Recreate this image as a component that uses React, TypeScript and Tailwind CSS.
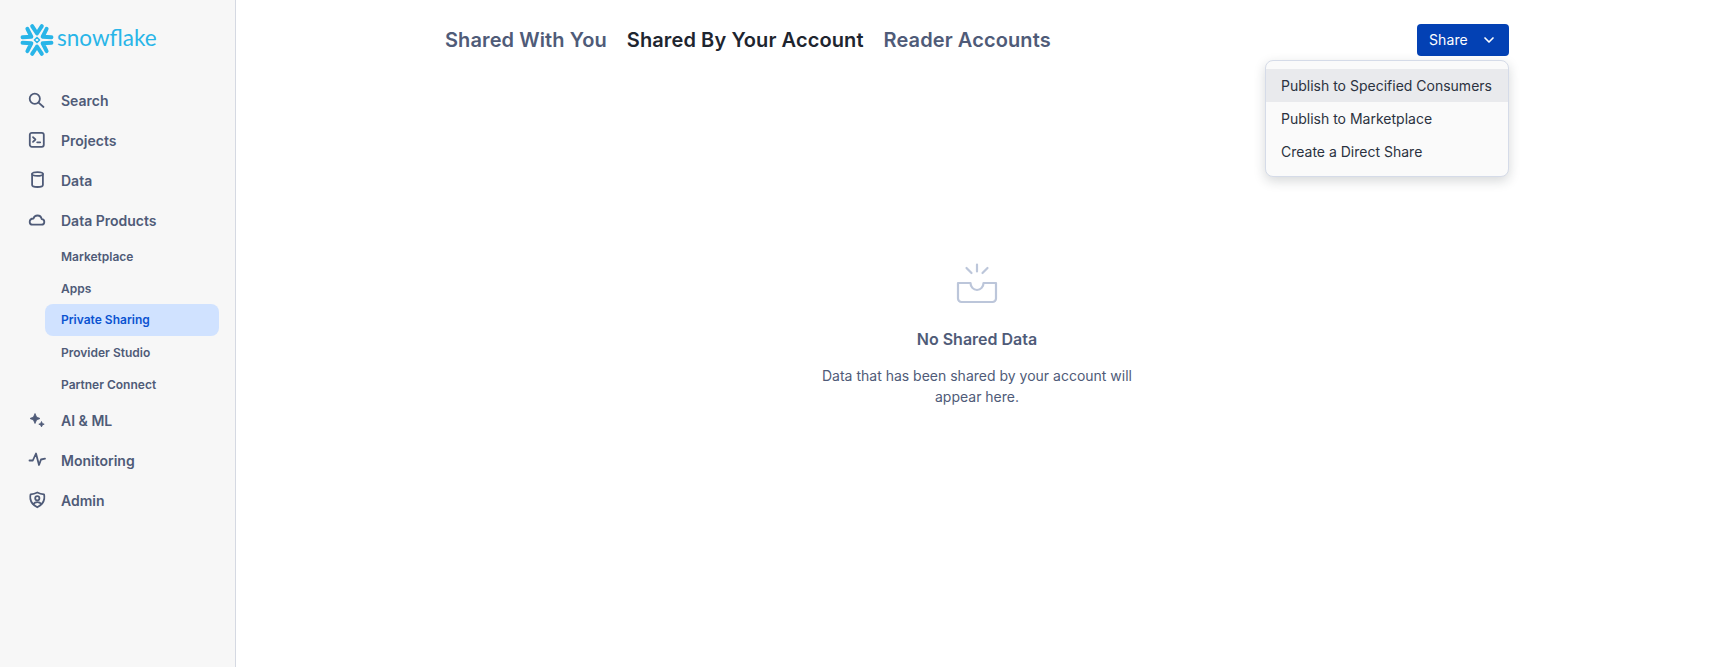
import type { ReactNode } from "react";
import { ChevronDown } from "lucide-react";

const iconProps = {
  width: 20,
  height: 20,
  viewBox: "0 0 20 20",
  fill: "none",
  stroke: "currentColor",
  strokeWidth: 1.8,
  strokeLinecap: "round" as const,
  strokeLinejoin: "round" as const,
};

const Search = () => (
  <svg {...iconProps}>
    <circle cx="7.800" cy="8.800" r="5.100" />
    <path d="M11.600 12.600l4.900 4.400" />
  </svg>
);

const Projects = () => (
  <svg {...iconProps}>
    <rect x="2.800" y="2.800" width="14" height="14" rx="2" />
    <path d="M6 7.200l2.400 2.300L6 11.800M10.200 12.300h3" />
  </svg>
);

const Data = () => (
  <svg {...iconProps}>
    <ellipse cx="10.500" cy="4" rx="5.400" ry="1.900" />
    <path d="M5.100 4v11c0 1.100 2.400 2 5.400 2s5.400-.9 5.400-2V4" />
  </svg>
);

const Cloud = () => (
  <svg {...iconProps}>
    <path d="M5.500 14.600h9c1.600 0 2.800-1.200 2.800-2.700 0-1.500-1.100-2.600-2.600-2.700C14.300 7 12.600 5.500 10.500 5.500 8.500 5.500 7 6.700 6.500 8.500 4.200 8.600 2.700 10 2.700 11.900c0 1.500 1.200 2.700 2.800 2.700z" />
  </svg>
);

const Sparkle = () => (
  <svg width="20" height="20" viewBox="0 0 20 20" fill="currentColor" stroke="currentColor" strokeWidth="0.8" strokeLinejoin="round">
    <path d="M8 3.500l1.500 3.500 3.500 1.500-3.500 1.500L8 13.500 6.500 10 3 8.500 6.500 7z" />
    <path d="M14.500 11.500l.8 1.900 1.900.8-1.900.8-.8 1.900-.8-1.900-1.900-.8 1.900-.8z" />
  </svg>
);

const Pulse = () => (
  <svg {...iconProps}>
    <path d="M2.500 10.500h3.300L9 3.500l3 11.500 2-5.500 4-.8" />
  </svg>
);

const Shield = () => (
  <svg {...iconProps}>
    <path d="M10.300 2.500c2 1 4 1.600 6.700 1.800.4 1.400.5 3 .2 4.700-.6 3.600-3.200 6.400-6.900 8.300-3.700-1.900-6.300-4.700-6.900-8.300-.3-1.700-.2-3.300.2-4.700 2.700-.2 4.700-.8 6.700-1.800z" />
    <circle cx="10.300" cy="8.200" r="2.100" />
    <path d="M6.300 14c1-1.300 2.400-1.900 4-1.900s3 .6 4 1.900" />
  </svg>
);

// six chevrons around a small hollow diamond
const SnowflakeMark = () => (
  <svg width="34" height="34" viewBox="0 0 33 33" fill="none" stroke="#29b5e8" strokeWidth="3.800" strokeLinecap="round" strokeLinejoin="round">
    {[0, 60, 120, 180, 240, 300].map((deg) => (
      <path key={deg} d="M11.800 3l4.700 7.200L21.200 3" transform={`rotate(${deg} 16.500 16.500)`} />
    ))}
    <path d="M16.500 14l2.500 2.500-2.500 2.500-2.500-2.500z" strokeWidth="1.500" />
  </svg>
);

const InboxEmpty = () => (
  <svg width="44" height="42" viewBox="0 0 44 42" fill="none" stroke="#bcc6da" strokeWidth="2.200" strokeLinecap="round" strokeLinejoin="round">
    <path d="M22 1.500v7M11.500 5l5 5M32.500 5l-5 5" />
    <path d="M15.500 20H3v15.500a3.500 3.500 0 0 0 3.500 3.500h31a3.500 3.500 0 0 0 3.500-3.500V20H28.500c0 3.700-2.800 7-6.500 7s-6.500-3.300-6.500-7z" />
  </svg>
);

const topItems = [
  { label: "Search", icon: <Search /> },
  { label: "Projects", icon: <Projects /> },
  { label: "Data", icon: <Data /> },
  { label: "Data Products", icon: <Cloud /> },
];

const subItems = ["Marketplace", "Apps", "Private Sharing", "Provider Studio", "Partner Connect"];

const bottomItems = [
  { label: "AI & ML", icon: <Sparkle /> },
  { label: "Monitoring", icon: <Pulse /> },
  { label: "Admin", icon: <Shield /> },
];

const NavItem = ({ label, icon }: { label: string; icon: ReactNode }) => (
  <div className="flex items-center h-10 pl-[27px] gap-[14px] text-[#4f5b78]">
    <span className="size-5 shrink-0">{icon}</span>
    <span className="pt-px text-sm font-semibold">{label}</span>
  </div>
);

export default function App() {
  return (
    <div className="flex h-[667px] bg-white font-['Inter',sans-serif] overflow-hidden">
      <aside className="w-[236px] shrink-0 bg-[#f7f7f7] border-r border-[#d5d9e2]">
        <div className="flex items-center h-[80px] pl-[20px] gap-[3px]">
          <SnowflakeMark />
          <span className="font-['Lato',sans-serif] font-normal text-[22.5px] leading-none pb-1 text-[#29b5e8]">snowflake</span>
        </div>
        <div className="flex flex-col">
          {topItems.map((item) => (
            <NavItem key={item.label} {...item} />
          ))}
          <div className="flex flex-col">
            {subItems.map((s) => (
              <div
                key={s}
                className={
                  s === "Private Sharing"
                    ? "flex items-center h-8 ml-[45px] mr-4 pl-[16px] rounded-lg bg-[#d0e2ff] text-xs font-semibold text-[#0b53d1]"
                    : "flex items-center h-8 ml-[45px] mr-4 pl-[16px] pt-px text-xs font-semibold text-[#4f5b78]"
                }
              >
                {s}
              </div>
            ))}
          </div>
          {bottomItems.map((item) => (
            <NavItem key={item.label} {...item} />
          ))}
        </div>
      </aside>

      <main className="flex-1 flex flex-col items-center pl-0.5">
        <div className="relative w-[1064px]">
          <div className="flex items-center justify-between pt-6">
            <div className="flex gap-5 text-xl font-semibold tracking-[0.1px] text-[#4f5b78]">
              <span>Shared With You</span>
              <span className="text-[#1e252f]">Shared By Your Account</span>
              <span>Reader Accounts</span>
            </div>
            <button className="flex items-center h-8 w-[92px] pl-3 gap-[13px] rounded bg-[#0341b4] text-white text-sm tracking-[0.1px]">
              Share
              <ChevronDown className="size-4" strokeWidth={2.5} />
            </button>
          </div>

          <div className="absolute top-[60px] right-0 w-[244px] h-[117px] py-2 rounded-lg border border-[#d5dbe8] bg-[#fafafa] text-sm text-[#2b3240] shadow-[0_4px_12px_rgba(30,37,47,0.18)]">
            <div className="flex items-center h-[33px] pl-[15px] bg-[#e9eaed]">Publish to Specified Consumers</div>
            <div className="flex items-center h-[33px] pl-[15px]">Publish to Marketplace</div>
            <div className="flex items-center h-[33px] pl-[15px]">Create a Direct Share</div>
          </div>
        </div>

        <div className="flex flex-col items-center w-[320px] pt-[207px] text-center text-[#4f5b78]">
          <InboxEmpty />
          <div className="mt-[22px] text-base font-semibold">No Shared Data</div>
          <p className="mt-[14px] text-sm leading-[21px]">Data that has been shared by your account will appear here.</p>
        </div>
      </main>
    </div>
  );
}
